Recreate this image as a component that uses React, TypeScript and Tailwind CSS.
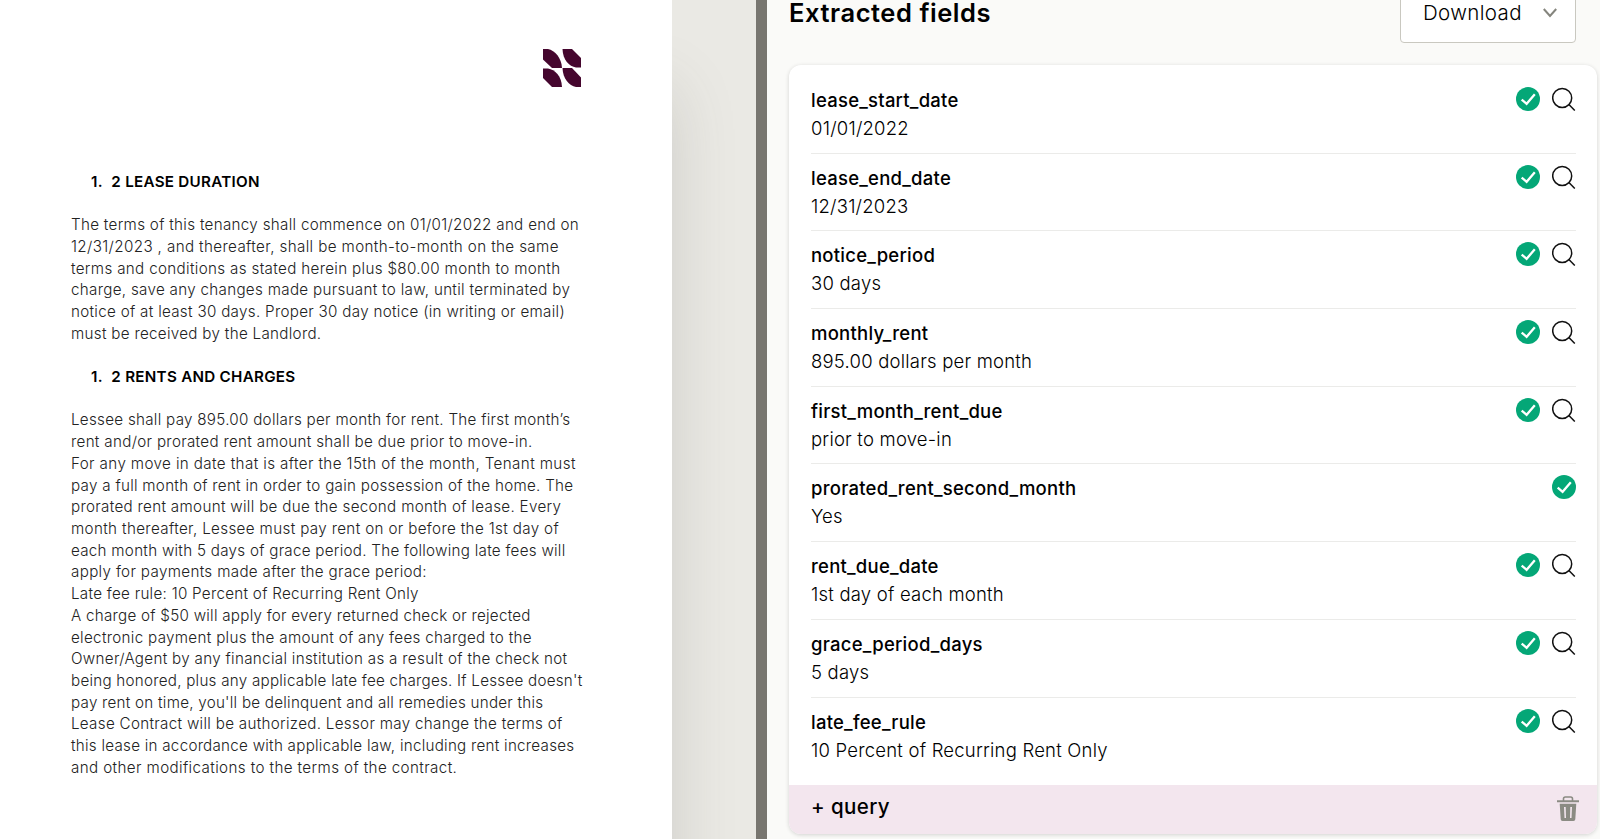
import React from "react";

type Field = { name: string; value: string; searchable?: boolean };
type Line = [text: string, tracking: number];

const fields: Field[] = [
  { name: "lease_start_date", value: "01/01/2022" },
  { name: "lease_end_date", value: "12/31/2023" },
  { name: "notice_period", value: "30 days" },
  { name: "monthly_rent", value: "895.00 dollars per month" },
  { name: "first_month_rent_due", value: "prior to move-in" },
  { name: "prorated_rent_second_month", value: "Yes", searchable: false },
  { name: "rent_due_date", value: "1st day of each month" },
  { name: "grace_period_days", value: "5 days" },
  { name: "late_fee_rule", value: "10 Percent of Recurring Rent Only" },
];

const duration: Line[] = [
  ["The terms of this tenancy shall commence on 01/01/2022 and end on", 0.3],
  ["12/31/2023 , and thereafter, shall be month-to-month on the same", 0.37],
  ["terms and conditions as stated herein plus $80.00 month to month", 0.33],
  ["charge, save any changes made pursuant to law, until terminated by", 0.3],
  ["notice of at least 30 days. Proper 30 day notice (in writing or email)", 0.3],
  ["must be received by the Landlord.", 0.3],
];

const rents: Line[] = [
  ["Lessee shall pay 895.00 dollars per month for rent. The first month’s", 0.28],
  ["rent and/or prorated rent amount shall be due prior to move-in.", 0.31],
  ["For any move in date that is after the 15th of the month, Tenant must", 0.38],
  ["pay a full month of rent in order to gain possession of the home. The", 0.28],
  ["prorated rent amount will be due the second month of lease. Every", 0.31],
  ["month thereafter, Lessee must pay rent on or before the 1st day of", 0.35],
  ["each month with 5 days of grace period. The following late fees will", 0.27],
  ["apply for payments made after the grace period:", 0.33],
  ["Late fee rule: 10 Percent of Recurring Rent Only", 0.28],
  ["A charge of $50 will apply for every returned check or rejected", 0.26],
  ["electronic payment plus the amount of any fees charged to the", 0.31],
  ["Owner/Agent by any financial institution as a result of the check not", 0.31],
  ["being honored, plus any applicable late fee charges. If Lessee doesn't", 0.25],
  ["pay rent on time, you'll be delinquent and all remedies under this", 0.25],
  ["Lease Contract will be authorized. Lessor may change the terms of", 0.3],
  ["this lease in accordance with applicable law, including rent increases", 0.26],
  ["and other modifications to the terms of the contract.", 0.38],
];

function Logo() {
  return (
    <svg className="h-[38px] w-[39px]" viewBox="0 0 39 38" fill="#45062e">
      <path d="M0 0H5C12 1.500 18.500 9 19 19H9L0 10.500Z" />
      <path d="M19.500 0H29L38 9V18.500H33C26 17.500 20 11 19.500 0Z" />
      <path d="M0 19.500H5C12 20.500 18.500 27 19 38H9L0 29Z" />
      <path d="M19.500 19H29L38 28.500V38H33C26 36.500 20 30 19.500 19Z" />
    </svg>
  );
}

function CheckBadge() {
  return (
    <svg className="h-6 w-6" viewBox="0 0 24 24" fill="none">
      <circle cx="12" cy="12" r="12" fill="#04a777" />
      <path d="M5.700 12.600L10.600 16.800L18.800 7.300" stroke="#fff" strokeWidth="2.300" />
    </svg>
  );
}

function SearchIcon() {
  return (
    <svg className="h-6 w-6" viewBox="0 0 24 24" fill="none" stroke="#111" strokeWidth="1.500">
      <circle cx="10.200" cy="10.900" r="9.500" />
      <path d="M16.900 17.500L22.800 23.500" />
    </svg>
  );
}

function TrashIcon() {
  return (
    <svg className="h-[25px] w-[22px]" viewBox="0 0 22 25" fill="none">
      <path d="M6.500 5V2.800Q6.500 1 8.300 1H13.700Q15.500 1 15.500 2.800V5" stroke="#8b8b83" strokeWidth="1.600" />
      <path d="M0 4.300H22V6.300H0Z" fill="#8b8b83" />
      <path
        fillRule="evenodd"
        d="M2.700 7.800H19.300L18.300 23.300Q18.200 25 16.500 25H5.500Q3.800 25 3.700 23.300ZM7 11L7.500 22H9L8.700 11ZM13.300 11L13 22H14.500L15 11Z"
        fill="#8b8b83"
      />
    </svg>
  );
}

function Heading({ children }: { children: React.ReactNode }) {
  return (
    <h2 className="flex gap-[8.500px] pl-5 font-semibold tracking-[0.270px] text-black">
      <span>1.</span>
      <span>{children}</span>
    </h2>
  );
}

function Paragraph({ lines }: { lines: Line[] }) {
  return (
    <div className="my-[21.700px] font-[360] whitespace-nowrap text-[#222]">
      {lines.map(([text, tracking]) => (
        <p key={text} style={{ letterSpacing: tracking }}>
          {text}
        </p>
      ))}
    </div>
  );
}

export default function App() {
  return (
    <div className="flex h-[839px] w-[1600px] overflow-hidden bg-[#fafaf8] font-['Inter',sans-serif] text-black">
      <div className="flex w-[756px] shrink-0 overflow-hidden bg-[#eae9e4]">
        <article className="flex h-full w-[672px] shrink-0 flex-col bg-white pt-[49px] pr-[90px] pl-[71px] text-[15.200px] leading-[21.700px] shadow-[0_90px_60px_rgba(80,80,70,0.180)]">
          <div className="flex justify-end">
            <Logo />
          </div>
          <div className="mt-[83.800px]">
            <Heading>2 LEASE DURATION</Heading>
            <Paragraph lines={duration} />
            <Heading>2 RENTS AND CHARGES</Heading>
            <Paragraph lines={rents} />
          </div>
        </article>
      </div>
      <div className="w-[11px] shrink-0 bg-[#787670]" />
      <main className="flex min-w-0 grow flex-col pr-[3px] pl-[22px]">
        <header className="flex h-[65px] shrink-0 items-start justify-between pr-[21px]">
          <h1 className="text-[25.500px] leading-[25px] font-[560] tracking-[0.550px]">Extracted fields</h1>
          <button className="-mt-[18px] flex h-[61px] w-[176px] items-center justify-between rounded border border-[#c9c8c0] bg-white pr-[18px] pl-[22px] text-[20.500px] font-light tracking-[0.350px]">
            <span className="pt-[2px]">Download</span>
            <svg className="h-[10px] w-[14px]" viewBox="0 0 14 10" fill="none" stroke="#85857d" strokeWidth="2">
              <path d="M0.800 1L7 8L13.200 1" />
            </svg>
          </button>
        </header>
        <section className="flex h-[769px] shrink-0 flex-col overflow-hidden rounded-xl bg-white shadow-[0_1px_4px_rgba(0,0,0,0.160)]">
          <ul className="grow pt-[11px] pr-[21px] pl-[22px]">
            {fields.map((field) => (
              <li
                key={field.name}
                className="flex h-[77.700px] items-start justify-between border-b border-[#ebebe9] pt-[9px] last:border-b-0"
              >
                <div className="pt-px">
                  <div className="text-[18.500px] leading-[28px] font-[530] tracking-[0.240px]">{field.name}</div>
                  <div className="text-[18.500px] leading-[28px] font-light tracking-[0.210px]">{field.value}</div>
                </div>
                <div className="flex gap-3 pt-[2px]">
                  <CheckBadge />
                  {field.searchable !== false && <SearchIcon />}
                </div>
              </li>
            ))}
          </ul>
          <footer className="flex h-[49px] shrink-0 items-center justify-between bg-[#f3e6ee] pr-[18px] pl-[22px]">
            <span className="pb-1 text-[20.500px] font-[530] tracking-[0.400px]">+ query</span>
            <div className="pb-[2px]">
              <TrashIcon />
            </div>
          </footer>
        </section>
      </main>
    </div>
  );
}
